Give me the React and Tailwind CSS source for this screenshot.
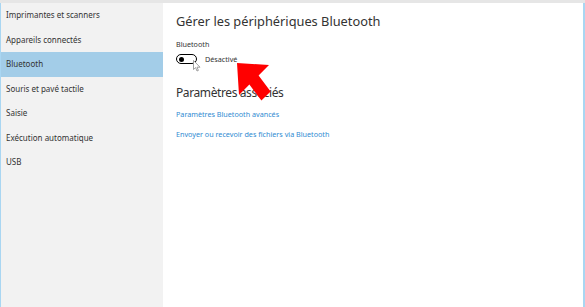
import React from 'react';

const items = [
  'Imprimantes et scanners',
  'Appareils connectés',
  'Bluetooth',
  'Souris et pavé tactile',
  'Saisie',
  'Exécution automatique',
  'USB',
];

const App = () => {
  return (
    <div
      className="relative w-[585px] h-[307px] flex flex-col bg-white overflow-hidden"
      style={{ fontFamily: '"Noto Sans", "Open Sans", sans-serif' }}
    >
      {/* top strip */}
      <div className="h-[3px] bg-[#e6e6e6] shrink-0" />

      <div className="flex flex-1 border-l border-r-2 border-[#a9d6f2]">
        {/* sidebar */}
        <div className="w-[162px] bg-[#f2f2f2] flex flex-col">
          {items.map((it) => (
            <div
              key={it}
              className={
                'h-[24.5px] flex items-center pl-[5px] text-[8px] text-[#333] ' +
                (it === 'Bluetooth' ? 'bg-[#a3cde8]' : '')
              }
            >
              {it}
            </div>
          ))}
        </div>

        {/* content */}
        <div className="flex-1 pl-[13px] pt-[10px] flex flex-col text-[#333]">
          <div className="text-[12.8px] leading-[16px]">Gérer les périphériques Bluetooth</div>
          <div className="mt-[10px] text-[7.2px] leading-[10px]">Bluetooth</div>
          <div className="mt-[5px] flex items-center gap-[8px]">
            <div className="w-[21px] h-[10px] rounded-full border-[1.5px] border-black flex items-center pl-[2px]">
              <div className="w-[5px] h-[5px] rounded-full bg-black" />
            </div>
            <span className="text-[7.2px]">Désactivé</span>
          </div>
          <div className="mt-[20px] text-[12px] leading-[16px] tracking-[-0.4px]">Paramètres associés</div>
          <div className="mt-[8px] text-[7.2px] leading-[10px] text-[#2f8bd2]">Paramètres Bluetooth avancés</div>
          <div className="mt-[10px] text-[7.2px] leading-[10px] text-[#2f8bd2]">
            Envoyer ou recevoir des fichiers via Bluetooth
          </div>
        </div>
      </div>

      {/* mouse cursor */}
      <svg className="absolute left-[193px] top-[60px]" width="8" height="12" viewBox="0 0 8 12">
        <path d="M0.5 0.5 L0.5 9.5 L2.6 7.6 L4 11 L5.4 10.4 L4 7.2 L7 7.2 Z" fill="#fff" stroke="#888" strokeWidth="0.8" />
      </svg>

      {/* red annotation arrow */}
      <svg className="absolute left-0 top-0" width="585" height="307" viewBox="0 0 585 307">
        <polygon
          points="237,63 269,65 258.6,75.4 270.6,91.4 261.4,100.6 249.4,84.6 239,95"
          fill="#ff0000"
        />
      </svg>
    </div>
  );
};

export default App;
